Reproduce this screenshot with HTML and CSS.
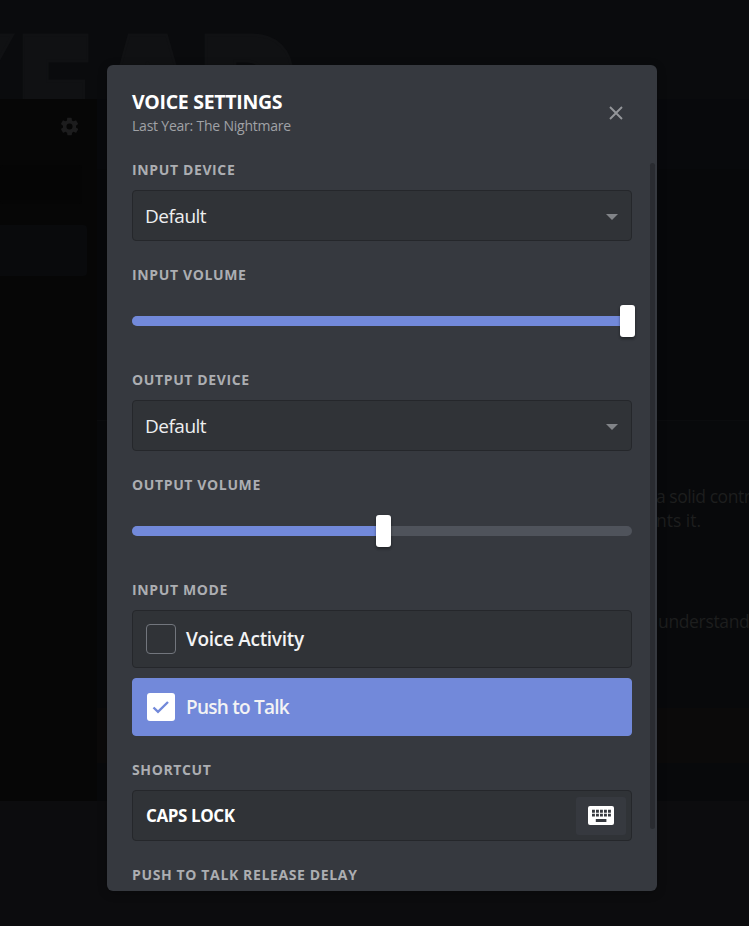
FILE: index.html
```
<!DOCTYPE html>
<html lang="en">
<head>
<meta charset="utf-8">
<title>Voice Settings</title>
<link rel="stylesheet" href="styles.css">
</head>
<body>
<div class="page">
  <header class="hero"><span class="ly">Y</span><span class="le">E</span><span class="la">A</span><span class="lr">R</span></header>
  <div class="columns">
    <aside class="side">
      <svg class="gear" width="21" height="21" viewBox="0 0 24 24"><path fill="currentColor" fill-rule="evenodd" d="M19.4 13a7.8 7.8 0 0 0 0-2l2.1-1.7a.5.5 0 0 0 .1-.6l-2-3.5a.5.5 0 0 0-.6-.2l-2.5 1a7.3 7.3 0 0 0-1.7-1l-.4-2.6a.5.5 0 0 0-.5-.4h-4a.5.5 0 0 0-.5.4L9.100 5a7.700 7.700 0 0 0-1.700 1L5 5a.5.5 0 0 0-.6.2l-2 3.500a.5.5 0 0 0 .1.600L4.600 11a7.900 7.900 0 0 0 0 2l-2.100 1.700a.5.5 0 0 0-.1.600l2 3.500c.1.200.4.300.600.200l2.500-1c.5.400 1.100.700 1.700 1l.4 2.600c0 .200.200.400.500.400h4c.2 0 .5-.2.5-.4l.4-2.600c.6-.3 1.200-.6 1.700-1l2.500 1c.2.100.5 0 .6-.2l2-3.500a.5.5 0 0 0-.1-.6zM12 15.500a3.500 3.500 0 1 1 0-7 3.500 3.500 0 0 1 0 7z"/></svg>
      <div class="side-search"></div>
      <div class="side-item"></div>
    </aside>
    <main class="content">
      <div class="summary"></div>
      <div class="review">
        <p class="quote">a solid contr</p>
        <p class="quote end">nts it.</p>
        <p class="quote second">understand</p>
      </div>
      <div class="band"></div>
    </main>
  </div>
</div>

<section class="modal">
  <header class="modal-head">
    <div>
      <h1>VOICE SETTINGS</h1>
      <p class="sub">Last Year: The Nightmare</p>
    </div>
    <svg class="close" width="14" height="14" viewBox="0 0 14 14"><path d="M1 1l12 12M13 1L1 13" stroke="currentColor" stroke-width="1.900" fill="none"/></svg>
  </header>
  <div class="modal-body">
    <div class="form">
      <h2>INPUT DEVICE</h2>
      <div class="field"><span class="value">Default</span><i class="caret"></i></div>
      <h2>INPUT VOLUME</h2>
      <div class="slider"><div class="track"><div class="fill" style="width:99%"></div><div class="thumb"></div></div></div>
      <h2>OUTPUT DEVICE</h2>
      <div class="field"><span class="value">Default</span><i class="caret"></i></div>
      <h2>OUTPUT VOLUME</h2>
      <div class="slider"><div class="track"><div class="fill" style="width:50.2%"></div><div class="thumb"></div></div></div>
      <h2>INPUT MODE</h2>
      <div class="option"><span class="box"></span><span class="opt-a">Voice Activity</span></div>
      <div class="option on"><span class="box"><svg width="18" height="14" viewBox="0 0 18 14"><path d="M1.500 7.500l4.500 4.300L16 2" fill="none" stroke="#7289da" stroke-width="2.400"/></svg></span><span class="opt-b">Push to Talk</span></div>
      <h2>SHORTCUT</h2>
      <div class="field"><span class="key">CAPS LOCK</span>
        <span class="record"><svg width="26" height="19" viewBox="0 0 26 19"><rect width="26" height="19" rx="2" fill="#fff"/><path d="M4 5.200h19M4 9.100h19" stroke="#36393f" stroke-width="2.900" stroke-dasharray="2.900 1.100"/><path d="M7.800 14.500h10.600" stroke="#36393f" stroke-width="2.800"/></svg></span>
      </div>
      <h2>PUSH TO TALK RELEASE DELAY</h2>
    </div>
    <div class="scrollbar"></div>
  </div>
</section>
</body>
</html>
```
FILE: styles.css
```
* { box-sizing: border-box; }
body { margin: 0; width: 749px; height: 926px; overflow: hidden; background: #0c0c0e; font-family: "Open Sans", "Noto Sans", sans-serif; }
h1, h2, p { margin: 0; }
.page { height: 926px; }
.hero { height: 99px; padding-top: 35px; overflow: hidden; display: flex; background: #0a0b0d; color: #101113; font: 900 164px/120px Inter, sans-serif; }
.hero span { display: block; flex: none; transform-origin: 0 0; -webkit-text-stroke: 3px #101113; }
.ly { width: 16px; margin-left: -111px; margin-right: 113px; }
.le { width: 75px; transform: scaleX(.74); }
.la { width: 106px; transform: scaleX(.85); }
.lr { transform: scaleX(.9); }
.columns { display: flex; height: 702px; }
.side { width: 97px; background: #060606; padding: 17px 10px 0 0; display: flex; flex-direction: column; align-items: flex-end; }
.gear { color: #1c1c1d; margin-right: 7px; }
.side-search { width: 82px; height: 39px; margin: 28px 5px 0 0; background: #050505; border-radius: 3px; }
.side-item { width: 87px; height: 51px; margin-top: 21px; background: #090a0c; border-radius: 0 4px 4px 0; }
.content { flex: 1; background: #08090b; }
.summary { height: 322px; border-bottom: 1px solid #0b0c0e; background: linear-gradient(#08090c 70px, #07080a 70px); }
.review { height: 287px; padding: 63px 0 0 559px; color: #1d1e1e; font-size: 17.500px; line-height: 24px; white-space: nowrap; overflow: hidden; }
.quote { letter-spacing: -.45px; }
.end { letter-spacing: 0; }
.second { margin-top: 77px; padding-left: 2px; letter-spacing: -.35px; }
.band { height: 55px; background: #0b0a0a; }

.modal { position: absolute; left: 107px; top: 65px; width: 550px; height: 826px; background: #36393f; border-radius: 6px; overflow: hidden; box-shadow: 0 2px 10px 0 rgba(0, 0, 0, .25); }
.modal-head { height: 95px; padding: 24px 34px 0 25px; display: flex; justify-content: space-between; }
h1 { font-size: 19.500px; line-height: 25px; color: #fff; font-weight: 700; letter-spacing: -.3px; }
.sub { margin-top: 2px; font-size: 14px; line-height: 19px; color: #a0a2a6; letter-spacing: -.22px; }
.close { color: #94969a; margin-top: 17px; }
.modal-body { height: 731px; display: flex; justify-content: space-between; padding: 0 2px 0 25px; }
.form { width: 500px; }
.scrollbar { width: 5px; height: 666px; margin-top: 3px; border-radius: 3px; background: #2a2c31; }
h2 { font-size: 14px; line-height: 20px; font-weight: 700; color: #acaeb2; white-space: nowrap; letter-spacing: .63px; }
.field { height: 51px; margin: 10px 0 24px; padding: 0 13px 0 12px; display: flex; align-items: center; justify-content: space-between; background: #303337; border: 1px solid #25272b; border-radius: 4px; }
.value { font-size: 19px; color: #eeeff0; letter-spacing: -.5px; }
.caret { border: 6px solid transparent; border-top-color: #818488; border-bottom: 0; margin-top: 2px; }
.slider { height: 85px; padding-top: 31px; }
.track { height: 10px; border-radius: 5px; background: #4f535b; display: flex; align-items: center; }
.fill { height: 10px; border-radius: 5px 0 0 5px; background: #7289da; flex: none; }
.thumb { width: 15px; height: 32px; margin-left: -7px; flex: none; border-radius: 3px; background: #fff; box-shadow: 0 3px 2px rgba(0, 0, 0, .12), 0 1px 3px rgba(0, 0, 0, .35); }
.option { height: 58px; margin-top: 10px; padding: 0 13px; display: flex; align-items: center; gap: 10px; font-size: 19px; font-weight: 600; color: #f3f3f4; background: #303337; border: 1px solid #25272b; border-radius: 4px; }
.opt-a { letter-spacing: -.3px; }
.opt-b { letter-spacing: -.75px; }
.option.on { margin: 10px 0 24px; background: #7289da; border-color: #7289da; }
.box { width: 30px; height: 30px; border: 1px solid #72767d; border-radius: 4px; display: flex; align-items: center; justify-content: center; }
.on .box { width: 28px; height: 28px; margin: 0 1px; border: 0; border-radius: 3px; background: #fff; }
.key { font-size: 17px; font-weight: 700; color: #fff; letter-spacing: -.4px; padding-left: 1px; }
.record { width: 50px; height: 38px; margin-right: -8px; display: flex; align-items: center; justify-content: center; border-radius: 3px; background: #36393f; }
```
